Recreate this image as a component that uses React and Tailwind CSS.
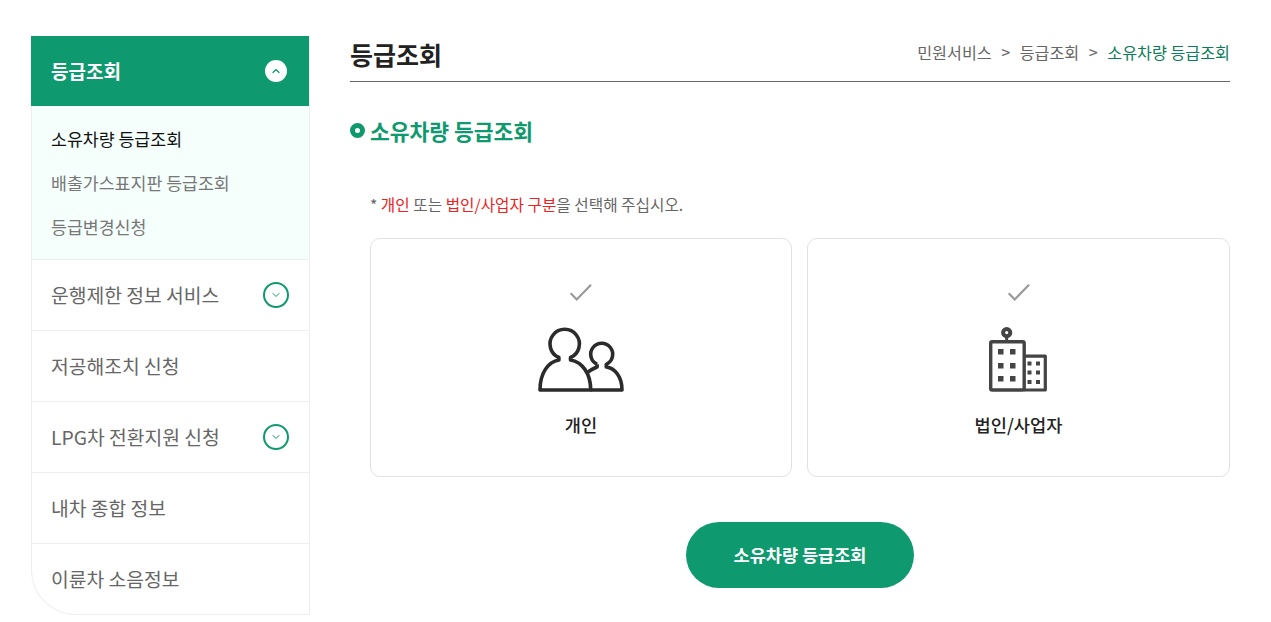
import { ChevronDown, ChevronUp } from 'lucide-react';

const subMenu = [
  { label: '소유차량 등급조회', active: true },
  { label: '배출가스표지판 등급조회' },
  { label: '등급변경신청' },
];

const menu = [
  { label: '운행제한 정보 서비스', more: true },
  { label: '저공해조치 신청' },
  { label: 'LPG차 전환지원 신청', more: true },
  { label: '내차 종합 정보' },
  { label: '이륜차 소음정보' },
];

const CheckMark = () => (
  <svg width="24" height="18" viewBox="0 0 24 18" fill="none" className="block">
    <polyline points="1.7,9.2 7.7,15.5 22,0.8" stroke="#9a9a9a" strokeWidth="2.2" />
  </svg>
);

const PeopleIcon = () => (
  <svg width="86" height="66" viewBox="0 0 86 66" fill="none" stroke="#2b2b2b" strokeWidth="3.6" strokeLinejoin="round" className="block">
    <path d="M20.9 30.5A14.7 14.7 0 1 1 32.5 30.5V33C44 35 52.7 46 52.7 63H2C2 46 10 35 20.9 33Z" />
    <path d="M59.1 37.3A11 11 0 1 1 68.3 37.3V40C77 41 84 50 84 63H52.7" />
    <path d="M59.1 37.3V40C56 41 53 43 50 45" />
  </svg>
);

const BuildingIcon = () => (
  <svg width="60" height="66" viewBox="0 0 60 66" fill="none" className="block">
    <circle cx="17.7" cy="5.6" r="3.6" stroke="#444" strokeWidth="4" />
    <path d="M17.7 9V14" stroke="#444" strokeWidth="3" />
    <rect x="1.7" y="14.7" width="33.5" height="48.3" rx="1.5" stroke="#444" strokeWidth="3.4" />
    <path d="M35 29.2H56.3V63H35" stroke="#444" strokeWidth="3.2" strokeLinejoin="round" />
    <g fill="#444">
      <rect x="9" y="22" width="5.5" height="5.5" />
      <rect x="21" y="22" width="5.5" height="5.5" />
      <rect x="9" y="36" width="5.5" height="5.5" />
      <rect x="21" y="36" width="5.5" height="5.5" />
      <rect x="9" y="49" width="5.5" height="5.5" />
      <rect x="21" y="49" width="5.5" height="5.5" />
      <rect x="38.5" y="34.5" width="4" height="4" />
      <rect x="47" y="34.5" width="4" height="4" />
      <rect x="38.5" y="43.5" width="4" height="4" />
      <rect x="47" y="43.5" width="4" height="4" />
      <rect x="38.5" y="53" width="4" height="4" />
      <rect x="47" y="53" width="4" height="4" />
    </g>
  </svg>
);

const TypeCard = ({ icon, label, className }) => (
  <div className={`h-[239px] border border-[#e2e2e2] rounded-[10px] flex flex-col items-center pt-[45px] ${className}`}>
    <CheckMark />
    <div className="h-[66px] mt-[25px]">{icon}</div>
    <div className="mt-[19px] text-[17.6px] leading-[26px] font-medium text-[#222]">{label}</div>
  </div>
);

const App = () => {
  return (
    <div
      className="flex items-start pt-[36px] pl-[31px] bg-white h-[622px] overflow-hidden"
      style={{ fontFamily: '"Noto Sans CJK KR", "Noto Sans", sans-serif' }}
    >
      <aside className="w-[279px] shrink-0 border-r border-b border-l border-[#eeeeee] rounded-bl-[45px]">
        <div className="h-[70px] -ml-px bg-[#0e9a6e] flex items-center justify-between pl-[20px] pr-[22px]">
          <span className="text-[19px] font-bold text-white">등급조회</span>
          <span className="w-[22px] h-[22px] rounded-full bg-white flex items-center justify-center">
            <ChevronUp size={12} strokeWidth={2.5} className="text-[#0e9a6e]" />
          </span>
        </div>
        <ul className="h-[153px] bg-[#f5fffc] pt-[11px] pl-[19px]">
          {subMenu.map((item) => (
            <li
              key={item.label}
              className={`h-[44px] flex items-center text-[17.3px] ${item.active ? 'text-[#111]' : 'text-[#777]'}`}
            >
              {item.label}
            </li>
          ))}
        </ul>
        {menu.map((item) => (
          <div
            key={item.label}
            className="h-[71px] border-t border-[#eeeeee] flex items-center justify-between pl-[19px] pr-[20px] text-[19.3px] text-[#666]"
          >
            <span className="pt-[1px]">{item.label}</span>
            {item.more && (
              <span className="w-[26px] h-[26px] rounded-full border-2 border-[#0e9a6e] flex items-center justify-center">
                <ChevronDown size={12} strokeWidth={2} className="text-[#0e9a6e]" />
              </span>
            )}
          </div>
        ))}
      </aside>

      <main className="w-[880px] ml-[40px]">
        <div className="h-[46px] border-b border-[#666] flex items-start justify-between">
          <h1 className="text-[25px] leading-[36px] font-bold text-[#222]">등급조회</h1>
          <nav className="flex items-center text-[16.2px] leading-[32px] text-[#666]">
            <span>민원서비스</span>
            <span className="mx-[9.5px]">&gt;</span>
            <span>등급조회</span>
            <span className="mx-[9.5px]">&gt;</span>
            <span className="text-[#0b7d59]">소유차량 등급조회</span>
          </nav>
        </div>

        <h2 className="mt-[33px] flex items-center text-[21.5px] leading-[32px] font-bold text-[#0e9a6e]">
          <span className="w-[15px] h-[15px] rounded-full border-[5px] border-[#0e9a6e] mr-[5px] mb-[2px]" />
          소유차량 등급조회
        </h2>

        <p className="mt-[46px] ml-[20px] text-[15.7px] leading-[24px] text-[#666]">
          * <span className="text-[#f02020]">개인</span> 또는{' '}
          <span className="text-[#f02020]">법인/사업자 구분</span>을 선택해 주십시오.
        </p>

        <div className="mt-[21px] ml-[20px] flex gap-[15px]">
          <TypeCard icon={<PeopleIcon />} label="개인" className="w-[422px] shrink-0" />
          <TypeCard icon={<BuildingIcon />} label="법인/사업자" className="flex-1" />
        </div>

        <div className="mt-[45px] ml-[20px] flex justify-center">
          <button className="w-[228px] h-[66px] rounded-full bg-[#0e9a6e] text-white text-[17.5px] font-bold">
            소유차량 등급조회
          </button>
        </div>
      </main>
    </div>
  );
};

export default App;
